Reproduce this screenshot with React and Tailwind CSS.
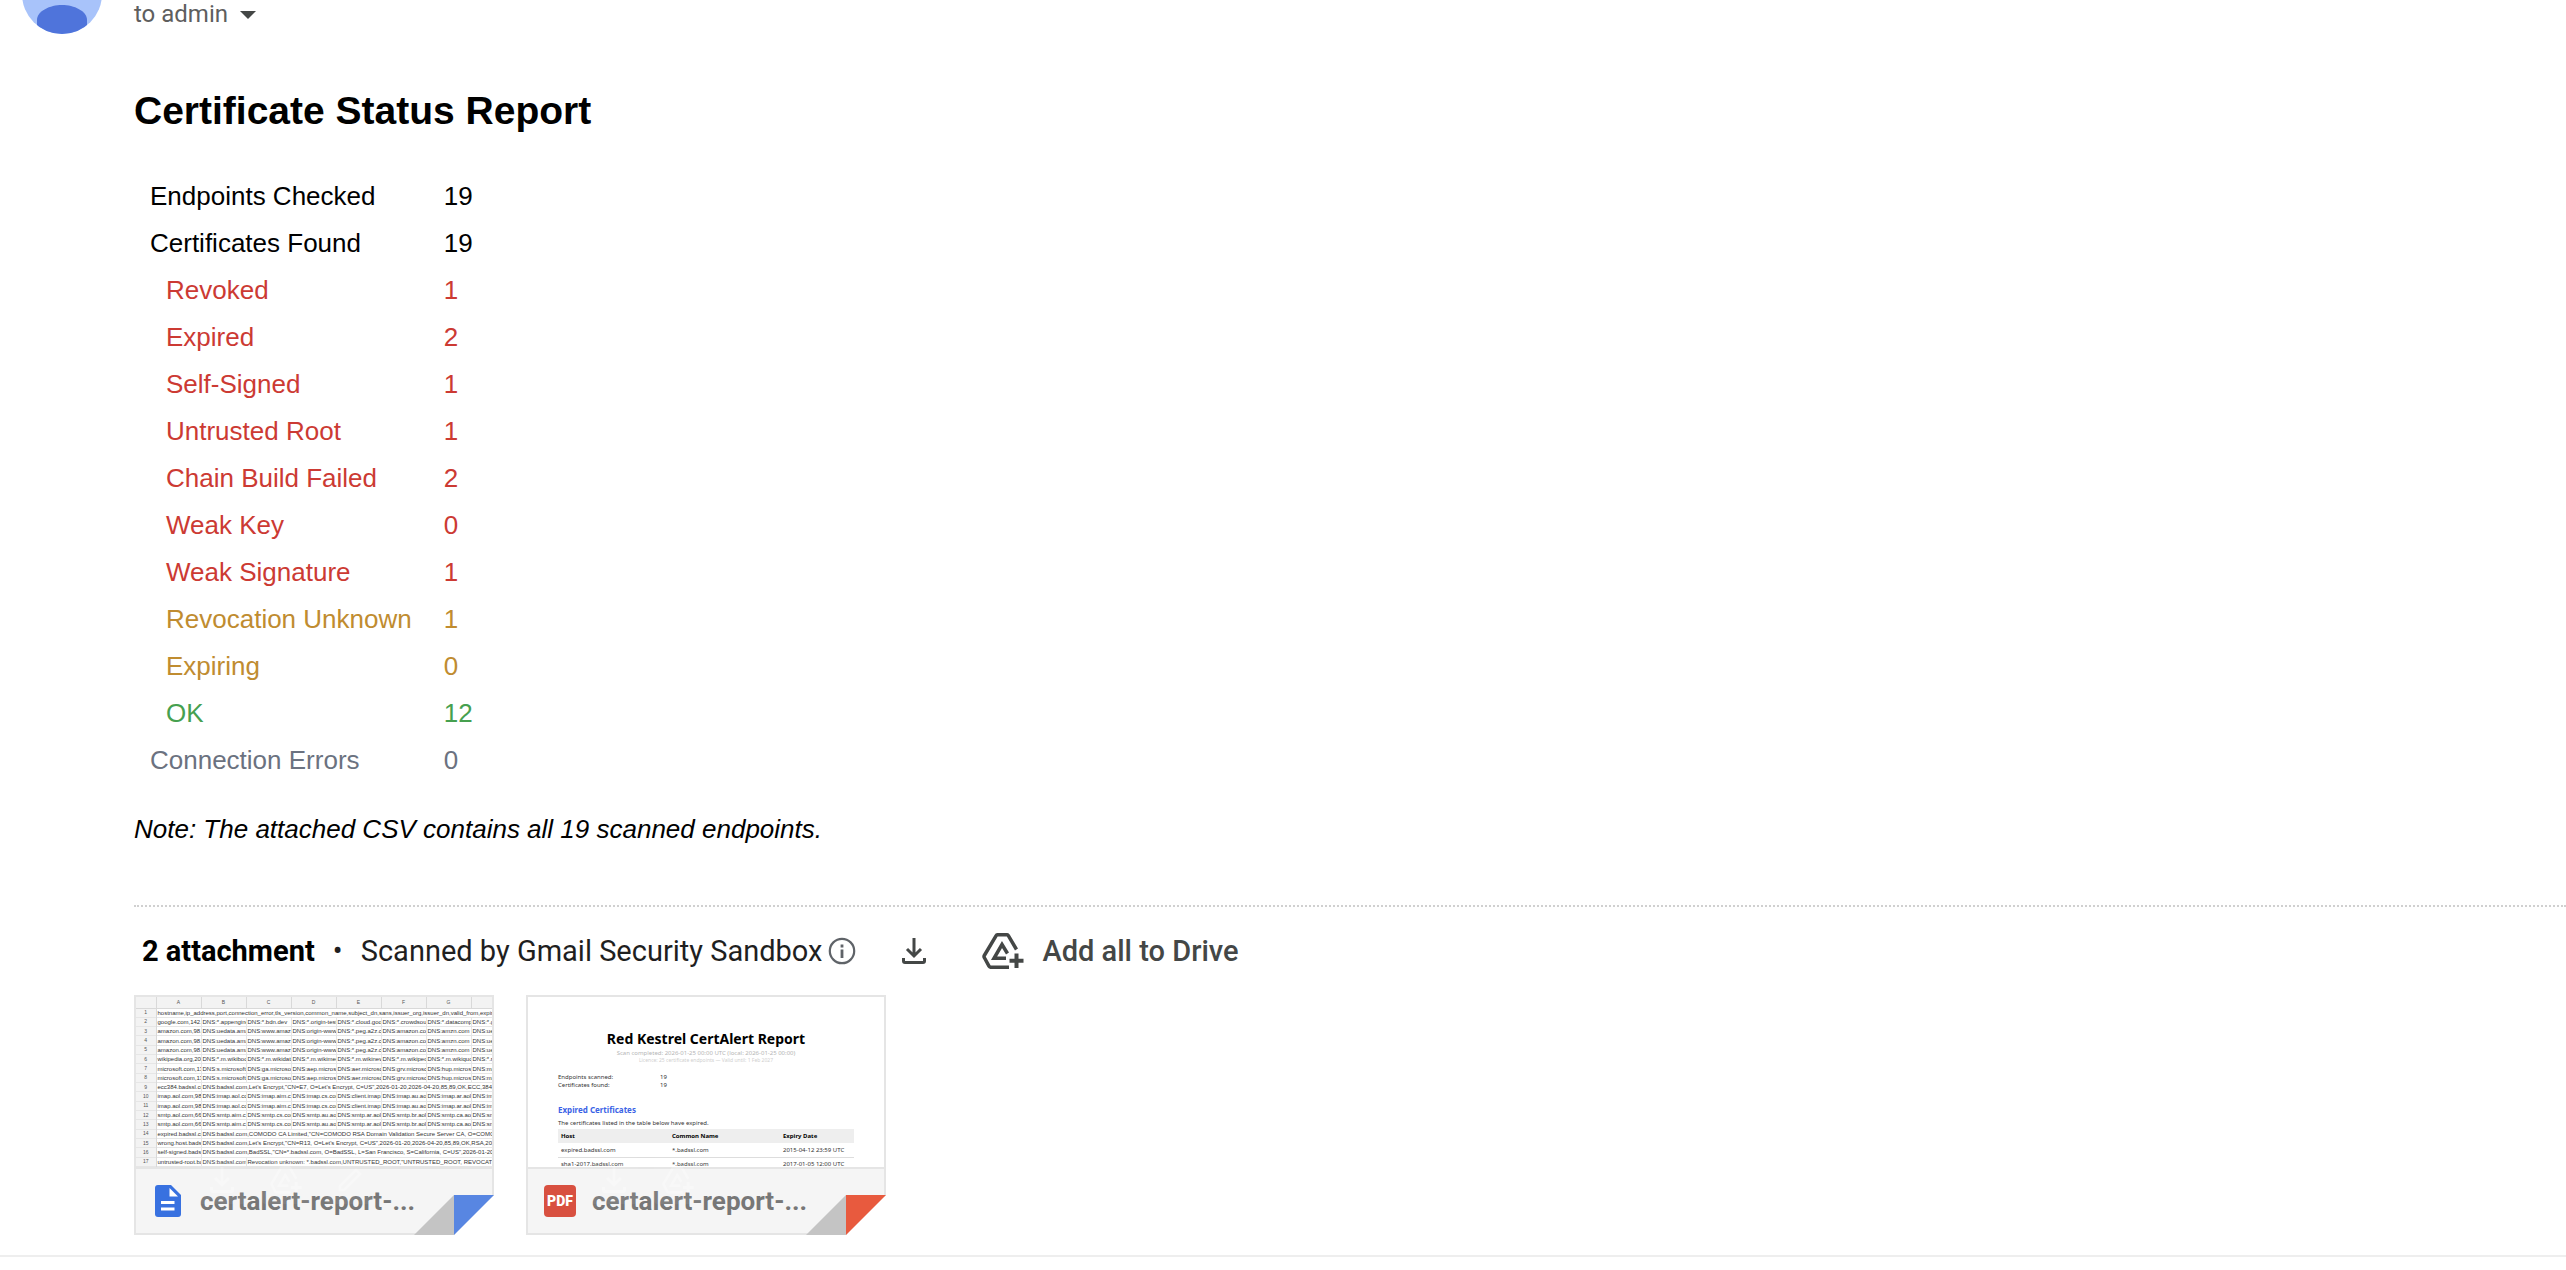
import clsx from 'clsx';

const statusRows = [
  { label: 'Endpoints Checked', value: 19, style: 'text-black' },
  { label: 'Certificates Found', value: 19, style: 'text-black' },
  { label: 'Revoked', value: 1, style: 'text-[#cc3a33]', nested: true },
  { label: 'Expired', value: 2, style: 'text-[#cc3a33]', nested: true },
  { label: 'Self-Signed', value: 1, style: 'text-[#cc3a33]', nested: true },
  { label: 'Untrusted Root', value: 1, style: 'text-[#cc3a33]', nested: true },
  { label: 'Chain Build Failed', value: 2, style: 'text-[#cc3a33]', nested: true },
  { label: 'Weak Key', value: 0, style: 'text-[#cc3a33]', nested: true },
  { label: 'Weak Signature', value: 1, style: 'text-[#cc3a33]', nested: true },
  { label: 'Revocation Unknown', value: 1, style: 'text-[#c08c30]', nested: true },
  { label: 'Expiring', value: 0, style: 'text-[#c08c30]', nested: true },
  { label: 'OK', value: 12, style: 'text-[#46a04f]', nested: true },
  { label: 'Connection Errors', value: 0, style: 'text-[#6b7280]' },
];

const sheetColumns = ['A', 'B', 'C', 'D', 'E', 'F', 'G', ''];

// The last cell of a short row runs on over the empty columns after it
const sheetRows = [
  ['hostname,ip_address,port,connection_error,tls_version,common_name,subject_dn,sans,issuer_org,issuer_dn,valid_from,expiry_da'],
  ['google.com,142.', 'DNS:*.appengine', 'DNS:*.bdn.dev', 'DNS:*.origin-test', 'DNS:*.cloud.goo', 'DNS:*.crowdsou', 'DNS:*.datacomp', 'DNS:*.g'],
  ['amazon.com,98.', 'DNS:uedata.ama', 'DNS:www.amaz', 'DNS:origin-www.', 'DNS:*.peg.a2z.c', 'DNS:amazon.co', 'DNS:amzn.com', 'DNS:ue'],
  ['amazon.com,98.', 'DNS:uedata.ama', 'DNS:www.amaz', 'DNS:origin-www.', 'DNS:*.peg.a2z.c', 'DNS:amazon.co', 'DNS:amzn.com', 'DNS:ue'],
  ['amazon.com,98.', 'DNS:uedata.ama', 'DNS:www.amaz', 'DNS:origin-www.', 'DNS:*.peg.a2z.c', 'DNS:amazon.co', 'DNS:amzn.com', 'DNS:ue'],
  ['wikipedia.org,208', 'DNS:*.m.wikiboo', 'DNS:*.m.wikidata', 'DNS:*.m.wikimed', 'DNS:*.m.wikinew', 'DNS:*.m.wikiped', 'DNS:*.m.wikiquo', 'DNS:*.r'],
  ['microsoft.com,13', 'DNS:s.microsoft.', 'DNS:ga.microsof', 'DNS:aep.micros', 'DNS:aer.microsc', 'DNS:grv.microsc', 'DNS:hup.micros', 'DNS:ma'],
  ['microsoft.com,13', 'DNS:s.microsoft.', 'DNS:ga.microsof', 'DNS:aep.micros', 'DNS:aer.microsc', 'DNS:grv.microsc', 'DNS:hup.micros', 'DNS:ma'],
  ['ecc384.badssl.co', 'DNS:badssl.com,Let\'s Encrypt,"CN=E7, O=Let\'s Encrypt, C=US",2026-01-20,2026-04-20,85,89,OK,ECC,384,sha'],
  ['imap.aol.com,98.', 'DNS:imap.aol.co', 'DNS:imap.aim.c', 'DNS:imap.cs.cor', 'DNS:client.imap.', 'DNS:imap.au.aol', 'DNS:imap.ar.aol', 'DNS:im'],
  ['imap.aol.com,98.', 'DNS:imap.aol.co', 'DNS:imap.aim.c', 'DNS:imap.cs.cor', 'DNS:client.imap.', 'DNS:imap.au.aol', 'DNS:imap.ar.aol', 'DNS:im'],
  ['smtp.aol.com,66.', 'DNS:smtp.aim.c', 'DNS:smtp.cs.cor', 'DNS:smtp.au.aol', 'DNS:smtp.ar.aol', 'DNS:smtp.br.aol', 'DNS:smtp.ca.aol', 'DNS:sn'],
  ['smtp.aol.com,66.', 'DNS:smtp.aim.c', 'DNS:smtp.cs.cor', 'DNS:smtp.au.aol', 'DNS:smtp.ar.aol', 'DNS:smtp.br.aol', 'DNS:smtp.ca.aol', 'DNS:sn'],
  ['expired.badssl.cc', 'DNS:badssl.com,COMODO CA Limited,"CN=COMODO RSA Domain Validation Secure Server CA, O=COMODO'],
  ['wrong.host.badss', 'DNS:badssl.com,Let\'s Encrypt,"CN=R13, O=Let\'s Encrypt, C=US",2026-01-20,2026-04-20,85,89,OK,RSA,2048,s'],
  ['self-signed.badss', 'DNS:badssl.com,BadSSL,"CN=*.badssl.com, O=BadSSL, L=San Francisco, S=California, C=US",2026-01-20,202'],
  ['untrusted-root.ba', 'DNS:badssl.com', 'Revocation unknown: *.badssl.com,UNTRUSTED_ROOT,"UNTRUSTED_ROOT, REVOCATIO'],
];

const expiredCerts = [
  { host: 'expired.badssl.com', name: '*.badssl.com', date: '2015-04-12 23:59 UTC' },
  { host: 'sha1-2017.badssl.com', name: '*.badssl.com', date: '2017-01-05 12:00 UTC' },
];

const DownloadIcon = ({ className }) => (
  <svg className={className} viewBox="0 0 24 26" fill="none" stroke="currentColor" strokeWidth="3" aria-hidden="true">
    <path d="M12 0v17M5 11l7 7 7-7" />
    <path d="M1.500 20v3a1.500 1.500 0 0 0 1.500 1.500h18a1.500 1.500 0 0 0 1.500-1.500v-3" />
  </svg>
);

const DriveAddIcon = ({ className }) => (
  <svg className={className} viewBox="0 0 42 36" fill="none" stroke="currentColor" strokeWidth="3.500" aria-hidden="true">
    <path d="M34.500 16.500 26.500 2.800a2 2 0 0 0-1.500-1H15.500a2 2 0 0 0-1.500 1L2.300 22.500a2 2 0 0 0 0 2L7 33.200a2 2 0 0 0 1.500 1H27" />
    <path d="M25.500 20.500 20 11.500 12 25.300h12" />
    <path d="M34.500 20.500v14.500M27.500 27.800h14" strokeWidth="4" />
  </svg>
);

const InfoIcon = () => (
  <svg className="size-7" viewBox="0 0 28 28" fill="none" stroke="currentColor" strokeWidth="2.200" aria-hidden="true">
    <circle cx="14" cy="14" r="12.200" />
    <path d="M14 12.500v8.500M14 7.500v3" strokeWidth="2.800" />
  </svg>
);

const PencilIcon = ({ className }) => (
  <svg className={className} viewBox="0 0 24 24" fill="none" stroke="currentColor" strokeWidth="2.500" aria-hidden="true">
    <path d="M2 22v-4L18 2l4 4L6 22z" />
  </svg>
);

const DocIcon = () => (
  <svg className="h-8 w-[26px]" viewBox="0 0 26 32" aria-hidden="true">
    <path d="M3 0h13l10 10v19a3 3 0 0 1-3 3H3a3 3 0 0 1-3-3V3a3 3 0 0 1 3-3z" fill="#3871e0" />
    <path d="M14.500 3v8.500H23z" fill="#fff" />
    <path d="M6 16h13.500v3H6zM6 22.500h13.500v3H6z" fill="#fff" />
  </svg>
);

const PdfIcon = () => (
  <span className="flex size-8 items-center justify-center rounded bg-[#d85040] font-['Roboto',sans-serif] text-[14px] leading-none font-black text-white">
    PDF
  </span>
);

function SheetPreview() {
  return (
    <table className="h-[170px] w-full table-fixed border-collapse bg-white font-['Liberation_Sans',sans-serif] text-[6px] leading-none text-[#333]">
      <colgroup>
        <col className="w-5" />
        {sheetColumns.map((col, idx) => (
          <col key={idx} className={idx < 7 ? 'w-[45px]' : ''} />
        ))}
      </colgroup>
      <thead>
        <tr className="h-[11px] bg-[#f3f3f3] text-[5px] text-[#555]">
          <th className="border-r border-b border-[#d9d9d9]"></th>
          {sheetColumns.map((col, idx) => (
            <th key={idx} className="border-r border-b border-[#d9d9d9] p-0 text-center font-normal last:border-r-0">{col}</th>
          ))}
        </tr>
      </thead>
      <tbody>
        {sheetRows.map((cells, idx) => (
          <tr key={idx} className="border-b border-[#e6e6e6]">
            <th className="border-r border-[#d9d9d9] bg-[#f3f3f3] p-0 text-center text-[5px] font-normal text-[#555]">{idx + 1}</th>
            {cells.map((cell, i) => (
              <td
                key={i}
                colSpan={i === cells.length - 1 ? 8 - i : 1}
                className="overflow-hidden border-r border-[#e6e6e6] p-0 pl-px whitespace-nowrap last:border-r-0"
              >
                {cell}
              </td>
            ))}
          </tr>
        ))}
      </tbody>
    </table>
  );
}

function ReportPreview() {
  return (
    <div className="h-[170px] overflow-hidden bg-white px-[30px] pt-8 font-['Noto_Sans',sans-serif] text-[6px] leading-2 text-[#333]">
      <p className="text-center text-[14px] leading-5 font-bold text-black">Red Kestrel CertAlert Report</p>
      <p className="text-center text-[#b5b5b5]">Scan completed: 2026-01-25 00:00 UTC (local: 2026-01-25 00:00)</p>
      <p className="text-center text-[5px] leading-1.5 text-[#cfcfcf]">Licence: 25 certificate endpoints — Valid until: 1 Feb 2027</p>
      <dl className="mt-2.5 grid grid-cols-[102px_1fr]">
        <dt>Endpoints scanned:</dt>
        <dd>19</dd>
        <dt>Certificates found:</dt>
        <dd>19</dd>
      </dl>
      <h3 className="mt-4 text-[8px] leading-2.5 font-bold text-[#3b63e6]">Expired Certificates</h3>
      <p className="mt-1">The certificates listed in the table below have expired.</p>
      <table className="mt-0.5 w-full table-fixed text-left">
        <thead>
          <tr className="h-3.5 bg-[#eeeeee] text-black">
            <th className="w-[111px] p-0 pl-[3px]">Host</th>
            <th className="w-[111px] p-0 pl-[3px]">Common Name</th>
            <th className="p-0 pl-[3px]">Expiry Date</th>
          </tr>
        </thead>
        <tbody>
          {expiredCerts.map((cert) => (
            <tr key={cert.host} className="h-3.5 border-b border-[#dddddd]">
              <td className="p-0 pl-[3px]">{cert.host}</td>
              <td className="p-0 pl-[3px]">{cert.name}</td>
              <td className="p-0 pl-[3px]">{cert.date}</td>
            </tr>
          ))}
        </tbody>
      </table>
    </div>
  );
}

function AttachmentCard({ icon, fold, editable, children }) {
  return (
    <article className="relative w-[360px] border-2 border-[#e5e5e5] bg-[#f5f5f5]">
      <div className="h-[170px] overflow-hidden">{children}</div>
      <div className="flex h-[66px] items-center border-t-2 border-[#e5e5e5] pl-4">
        <span className="flex w-8 justify-center">{icon}</span>
        <a href="#" className="ml-4 font-['Roboto',sans-serif] text-[26px] leading-8 font-bold whitespace-nowrap text-[#777]">
          certalert-report-...
        </a>
      </div>

      <div className="absolute top-[159px] left-[62px] flex gap-4 text-white opacity-30">
        <button type="button" aria-label="Download" className="flex size-12 items-center justify-center rounded bg-white/20">
          <DownloadIcon className="h-[26px] w-6" />
        </button>
        <button type="button" aria-label="Add to Drive" className="flex size-12 items-center justify-center rounded bg-white/20">
          <DriveAddIcon className="h-7 w-8" />
        </button>
        {editable && (
          <button type="button" aria-label="Edit" className="flex size-12 items-center justify-center rounded bg-white/20">
            <PencilIcon className="size-6" />
          </button>
        )}
      </div>

      {/* folded corner */}
      <svg className="absolute -right-0.5 -bottom-0.5 h-10 w-20" viewBox="0 0 80 40" aria-hidden="true">
        <path d="M80 0v40H40z" fill="#fff" />
        <path d="M0 40 40 0v40z" fill="#c4c4c4" />
        <path d="M40 0h40L40 40z" className={fold} />
      </svg>
    </article>
  );
}

export default function App() {
  return (
    <div className="min-h-screen bg-white font-['Liberation_Sans',Arial,sans-serif]">
      <main className="overflow-hidden border-b-2 border-[#eeeeee] pb-5">
        <header className="flex h-[34px] items-end pl-[22px]">
          <svg className="size-20 shrink-0" viewBox="0 0 80 80" role="img" aria-label="Sender">
            <clipPath id="avatar">
              <circle cx="40" cy="40" r="40" />
            </clipPath>
            <g clipPath="url(#avatar)">
              <path d="M0 0h80v80H0z" fill="#a8c3fa" />
              <path d="M15 90V66c0-9 13-15 25-15s25 6 25 15v24z" fill="#4f74db" />
            </g>
          </svg>
          <button
            type="button"
            className="ml-8 flex h-[34px] items-start gap-3 font-['Roboto',sans-serif] text-[24px] leading-7 text-[#5e5e5e]"
          >
            to admin
            <svg className="mt-[11px] h-2 w-4" viewBox="0 0 16 8" fill="#444746" aria-hidden="true">
              <path d="M0 0h16L8 8z" />
            </svg>
          </button>
        </header>

        <section className="pt-[54px] pl-[134px] text-[26px] leading-[31px] text-black">
          <h2 className="text-[39px] leading-[46px] font-bold">Certificate Status Report</h2>
          <table className="mt-[39px]">
            <tbody>
              {statusRows.map((row) => (
                <tr key={row.label} className={clsx('h-[47px]', row.style)}>
                  <th scope="row" className={clsx('p-0 pr-4 text-left font-normal', row.nested ? 'pl-8' : 'pl-4')}>
                    {row.label}
                  </th>
                  <td className="p-0 px-4">{row.value}</td>
                </tr>
              ))}
            </tbody>
          </table>
          <p className="mt-[30px] italic">Note: The attached CSV contains all 19 scanned endpoints.</p>
        </section>

        <section className="mt-[60px] ml-[134px] border-t-2 border-dotted border-[#d0d0d0]">
          <div className="flex h-[88px] items-center pl-2 font-['Roboto',sans-serif] text-[29px] leading-8 text-[#1f1f1f]">
            <p className="font-bold text-black">2 attachment</p>
            <span className="w-[46px] text-center">•</span>
            <p>Scanned by Gmail Security Sandbox</p>
            <button type="button" aria-label="About scanning" className="ml-1.5 text-[#5f6368]">
              <InfoIcon />
            </button>
            <button type="button" aria-label="Download all attachments" className="ml-[46px] text-[#444746]">
              <DownloadIcon className="h-[26px] w-6" />
            </button>
            <button type="button" className="ml-14 flex items-center gap-[18px] font-medium text-[#444746]">
              <DriveAddIcon className="h-9 w-[42px]" />
              Add all to Drive
            </button>
          </div>
          <div className="flex gap-8">
            <AttachmentCard icon={<DocIcon />} fold="fill-[#5886e2]" editable>
              <SheetPreview />
            </AttachmentCard>
            <AttachmentCard icon={<PdfIcon />} fold="fill-[#e85a3e]">
              <ReportPreview />
            </AttachmentCard>
          </div>
        </section>
      </main>
    </div>
  );
}
